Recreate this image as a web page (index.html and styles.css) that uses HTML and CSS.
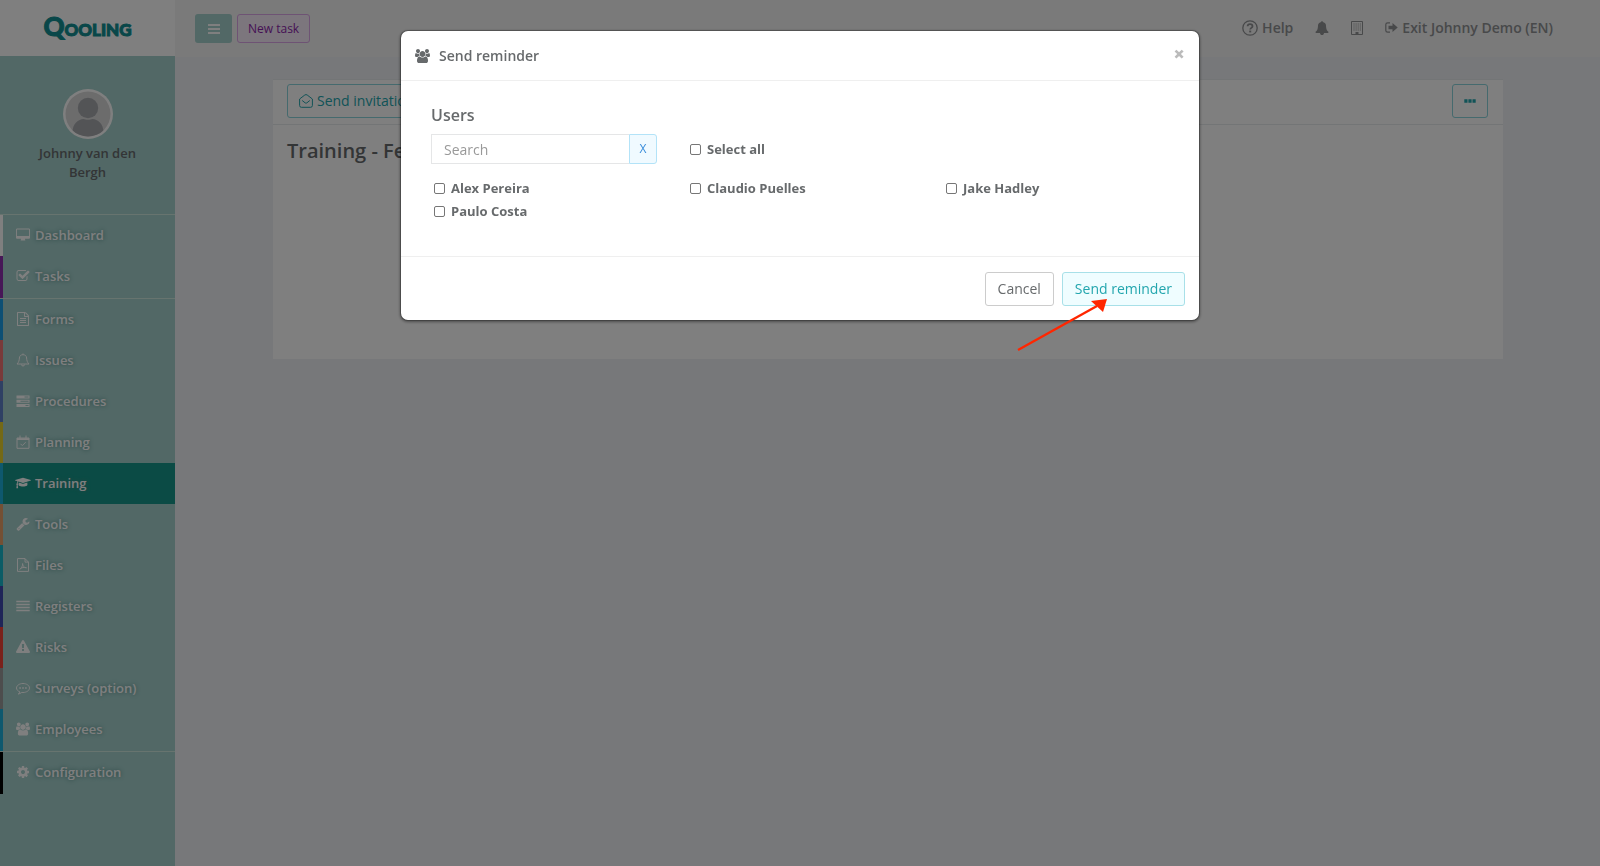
FILE: index.html
```html
<!DOCTYPE html>
<html lang="en">
<head>
<meta charset="utf-8">
<title>Qooling - Training</title>
<link rel="stylesheet" href="styles.css">
</head>
<body>
<div class="app">
  <aside class="sidebar">
    <a class="logo" href="#"><span class="logo-q">Q</span>OOLING</a>
    <div class="profile">
      <svg class="avatar" viewBox="0 0 50 50" aria-hidden="true">
        <defs><clipPath id="face"><circle cx="25" cy="25" r="22.5"/></clipPath></defs>
        <circle cx="25" cy="25" r="25" fill="#fff"/>
        <circle cx="25" cy="25" r="22.5" fill="#d8d8d9"/>
        <g clip-path="url(#face)" fill="#a6a8ad"><circle cx="25" cy="19" r="10.2"/><path d="M9.500 50V43c0-8 6-13 11-13 2 1 7 1 9 0 5 0 11 5 11 13v7z"/></g>
      </svg>
      <div class="profile-name">Johnny van den Bergh</div>
    </div>
    <nav>
      <ul class="menu">
        <li class="c-white"><a href="#"><svg viewBox="0 0 1920 1792"><path d="M1792 992v-832q0-13-9.500-22.500t-22.500-9.500h-1600q-13 0-22.500 9.500t-9.500 22.500v832q0 13 9.500 22.500t22.500 9.500h1600q13 0 22.500-9.500t9.500-22.500zm128-832v1088q0 66-47 113t-113 47h-544q0 37 16 77.500t32 71 16 43.500q0 26-19 45t-45 19h-512q-26 0-45-19t-19-45q0-14 16-44t32-70 16-78h-544q-66 0-113-47t-47-113v-1088q0-66 47-113t113-47h1600q66 0 113 47t47 113z"/></svg>Dashboard</a></li>
        <li class="c-purple"><a href="#"><svg viewBox="0 0 1792 1792"><path d="M1472 930v318q0 119-84.500 203.500t-203.500 84.500h-832q-119 0-203.500-84.500t-84.500-203.500v-832q0-119 84.500-203.500t203.500-84.500h832q63 0 117 25 15 7 18 23 3 17-9 29l-49 49q-10 10-23 10-3 0-9-2-23-6-45-6h-832q-66 0-113 47t-47 113v832q0 66 47 113t113 47h832q66 0 113-47t47-113v-254q0-13 9-22l64-64q10-10 23-10 6 0 12 3 20 8 20 29zm231-489l-814 814q-24 24-57 24t-57-24l-430-430q-24-24-24-57t24-57l110-110q24-24 57-24t57 24l263 263 647-647q24-24 57-24t57 24l110 110q24 24 24 57t-24 57z"/></svg>Tasks</a></li>
      </ul>
      <ul class="menu">
        <li class="c-blue"><a href="#"><svg viewBox="0 0 1792 1792"><path d="M1596 380q28 28 48 76t20 88v1152q0 40-28 68t-68 28h-1344q-40 0-68-28t-28-68v-1600q0-40 28-68t68-28h896q40 0 88 20t76 48zm-444-244v376h376q-10-29-22-41l-313-313q-12-12-41-22zm384 1528v-1024h-416q-40 0-68-28t-28-68v-416h-768v1536h1280zM512 768h768v128H512zM512 1024h768v128H512zM512 1280h768v128H512z"/></svg>Forms</a></li>
        <li class="c-salmon"><a href="#"><svg class="line" viewBox="0 0 14 14"><path d="M1 11h12C11.200 9.300 10.800 7.500 10.600 5 10.500 2.800 9 1.700 7 1.700S3.500 2.800 3.400 5C3.200 7.500 2.800 9.300 1 11zM5.500 11.500a1.500 1.500 0 0 0 3 0M7 .5v1"/></svg>Issues</a></li>
        <li class="c-indigo"><a href="#"><svg viewBox="0 0 14 14"><path d="M.5 1.500h13v3H.5zM.5 5.700h13v3H.5zM.5 9.900h13v3H.5z"/><path class="cut" d="M8.500 2.500h4v1h-4zM4.500 6.700h8v1h-8zM9.500 10.900h3v1h-3z"/></svg>Procedures</a></li>
        <li class="c-yellow"><a href="#"><svg class="line" viewBox="0 0 14 14"><path d="M1 3h12v10.300H1zM1 4.500h12M1 3.700h12M4 .5v3M10 .5v3M4.500 8.800l1.800 1.800 3.400-3.400"/></svg>Planning</a></li>
        <li class="c-cyan active"><a href="#"><svg class="wide" viewBox="0 0 2304 1792"><path d="M1774 836l18 316q4 69-82 128t-235 93.500-323 34.500-323-34.500-235-93.500-82-128l18-316 574 181q22 7 48 7t48-7zm530-324q0 23-22 31l-1120 352q-4 1-10 1t-10-1l-652-206q-43 34-71 111.500t-34 178.500q63 36 63 109 0 69-58 107l58 433q2 14-8 25-9 11-24 11h-192q-15 0-24-11-10-11-8-25l58-433q-58-38-58-107 0-73 65-111 11-207 98-330l-333-104q-22-8-22-31t22-31l1120-352q4-1 10-1t10 1l1120 352q22 8 22 31z"/></svg>Training</a></li>
        <li class="c-orange"><a href="#"><svg viewBox="0 0 1792 1792"><path d="M448 1472q0-26-19-45t-45-19-45 19-19 45 19 45 45 19 45-19 19-45zm644-420l-682 682q-37 37-90 37-52 0-91-37l-106-108q-38-36-38-90 0-53 38-91l681-681q39 98 114.500 173.500t173.500 114.500zm634-435q0 39-23 106-47 134-164.500 217.500t-258.500 83.500q-185 0-316.500-131.500t-131.500-316.500 131.500-316.500 316.500-131.500q58 0 121.500 16.500t107.500 46.500q16 11 16 28t-16 28l-293 169v224l193 107q5-3 79-48.500t135.500-81 70.500-35.500q15 0 23.500 10t8.500 25z"/></svg>Tools</a></li>
        <li class="c-teal"><a href="#"><svg class="line" viewBox="0 0 14 14"><path d="M1.500.6h7.500l3.500 3.500v9.300h-11zM9 .6v3.500h3.500M3.500 11.600c1.800-.8 3.200-3.600 3.200-6M6.500 5.500c.1 2.200 1.500 4.200 4 4.500M4.200 10.600c1.600-1 3.800-1.400 6.300-1"/></svg>Files</a></li>
        <li class="c-navy"><a href="#"><svg viewBox="0 0 14 14"><path d="M.3 1.700h13.400v1.600H.3zM.3 4.700h13.400v1.600H.3zM.3 7.700h13.400v1.600H.3zM.3 10.700h13.400v1.600H.3z"/></svg>Registers</a></li>
        <li class="c-red"><a href="#"><svg viewBox="0 0 1792 1792"><path d="M1024 1375v-190q0-14-9.500-23.500t-22.500-9.500h-192q-13 0-22.500 9.500t-9.500 23.500v190q0 14 9.500 23.500t22.500 9.500h192q13 0 22.500-9.500t9.500-23.500zm-2-374l18-459q0-12-10-19-13-11-24-11h-220q-11 0-24 11-10 7-10 21l17 457q0 10 10 16.500t24 6.500h185q14 0 23.500-6.500t10.500-16.500zm-14-934l768 1408q35 63-2 126-17 29-46.500 46t-63.500 17h-1536q-34 0-63.500-17t-46.500-46q-37-63-2-126l768-1408q17-31 47-49t65-18 65 18 47 49z"/></svg>Risks</a></li>
        <li class="c-grey"><a href="#"><svg class="line" viewBox="0 0 14 14"><path d="M4 11c-2-.8-3.500-2.300-3.500-4 0-2.500 3-4.500 6.500-4.500s6.500 2 6.500 4.500-3 4.500-6.500 4.500L5.800 11.400C4.800 12.300 3.500 12.900 2.200 13c1-.6 1.600-1.200 1.800-2z"/><path class="dots" d="M3.300 6.200h1.600v1.600H3.300zM6.200 6.200h1.600v1.600H6.200zM9.100 6.200h1.600v1.600H9.100z"/></svg>Surveys (option)</a></li>
        <li class="c-cyan"><a href="#"><svg viewBox="0 0 1920 1792"><path d="M593 896q-162 5-265 128h-134q-82 0-138-40.500t-56-118.500q0-353 124-353 6 0 43.500 21t97.500 42.500 119 21.500q67 0 133-23-5 37-5 66 0 159 81 256zm1071 637q0 120-73 189.500t-194 69.500h-874q-121 0-194-69.500t-73-189.500q0-53 3.500-103.500t14-109 26.500-108.500 43-97.500 62-81 85.500-53.500 111.500-20q10 0 43 21.500t73 48 107 48 135 21.500 135-21.500 107-48 73-48 43-21.500q61 0 111.500 20t85.500 53.500 62 81 43 97.500 26.500 108.500 14 109 3.500 103.500zm-1024-1277q0 106-75 181t-181 75-181-75-75-181 75-181 181-75 181 75 75 181zm704 384q0 159-112.500 271.500t-271.500 112.500-271.500-112.500-112.500-271.500 112.500-271.500 271.500-112.500 271.500 112.500 112.500 271.500zm576 225q0 78-56 118.500t-138 40.500h-134q-103-123-265-128 81-97 81-256 0-29-5-66 66 23 133 23 59 0 119-21.500t97.500-42.500 43.500-21q124 0 124 353zm-128-609q0 106-75 181t-181 75-181-75-75-181 75-181 181-75 181 75 75 181z"/></svg>Employees</a></li>
      </ul>
      <ul class="menu">
        <li class="c-black"><a href="#"><svg viewBox="0 0 1792 1792"><path d="M1152 896q0-106-75-181t-181-75-181 75-75 181 75 181 181 75 181-75 75-181zm512-109v222q0 12-8 23t-20 13l-185 28q-19 54-39 91 35 50 107 138 10 12 10 25t-9 23q-27 37-99 108t-94 71q-12 0-26-9l-138-108q-44 23-91 38-16 136-29 186-7 28-36 28h-222q-14 0-24.500-8.500t-11.500-21.500l-28-184q-49-16-90-37l-141 107q-10 9-25 9-14 0-25-11-126-114-165-168-7-10-7-23 0-12 8-23 15-21 51-66.500t54-70.500q-27-50-41-99l-183-27q-13-2-21-12.500t-8-23.500v-222q0-12 8-23t19-13l186-28q14-46 39-92-40-57-107-138-10-12-10-24 0-10 9-23 26-36 98.500-107.500t94.500-71.500q13 0 26 10l138 107q44-23 91-38 16-136 29-186 7-28 36-28h222q14 0 24.500 8.500t11.500 21.500l28 184q49 16 90 37l142-107q9-9 24-9 13 0 25 10 129 119 165 170 7 8 7 22 0 12-8 23-15 21-51 66.500t-54 70.500q26 50 41 98l183 28q13 2 21 12.500t8 23.500z"/></svg>Configuration</a></li>
      </ul>
    </nav>
  </aside>

  <main class="main">
    <header class="topbar">
      <button class="toggle" type="button" aria-label="Toggle menu"><svg viewBox="0 0 12 12"><path d="M0 1h12v2H0zM0 5h12v2H0zM0 9h12v2H0z"/></svg></button>
      <button class="new-task" type="button">New task</button>
      <div class="top-links">
        <a href="#"><svg class="help-icon" viewBox="0 0 16 16"><circle cx="8" cy="8" r="7.200" fill="none" stroke="currentColor" stroke-width="1.300"/><path d="M5.600 6.300C5.700 4.900 6.600 4.200 8 4.200s2.500.8 2.500 2c0 1.600-2.300 1.700-2.300 3.300" fill="none" stroke="currentColor" stroke-width="1.800"/><path d="M7.200 10.600h2v1.800h-2z"/></svg>Help</a>
        <a href="#" aria-label="Notifications"><svg viewBox="0 0 1792 1792"><path d="M1728 1408q0 52-38 90t-90 38h-448q0 106-75 181t-181 75-181-75-75-181h-448q-52 0-90-38t-38-90q50-42 91-88t85-119.500 74.500-158.500 50-206 19.500-260q0-152 117-282.500t307-158.500q-8-19-8-39 0-40 28-68t68-28 68 28 28 68q0 20-8 39 190 28 307 158.500t117 282.500q0 139 19.500 260t50 206 74.500 158.500 85 119.500 91 88z"/></svg></a>
        <a href="#" aria-label="Company"><svg class="building" viewBox="0 0 12 14"><path d="M.5.5h11v13H.5z" fill="none" stroke="currentColor"/><path d="M2.500 3h7.500M2.500 5h7.500M2.500 7h7.500M2.500 9h7.500" fill="none" stroke="currentColor" stroke-dasharray="1 1.100"/><path d="M4.500 11h3v3h-3z"/></svg></a>
        <a href="#"><svg class="exit-icon" viewBox="0 0 13 13"><path d="M5 1.800H2.700Q.8 1.800.8 3.500v6q0 1.700 1.900 1.700H5" fill="none" stroke="currentColor" stroke-width="1.200"/><path d="M3.500 4.800h4V2l5.200 4.500L7.500 11V8.200h-4z"/></svg>Exit Johnny Demo (EN)</a>
      </div>
    </header>
    <section class="card">
      <div class="card-tools">
        <button class="outline" type="button"><svg viewBox="0 0 14 14"><path d="M.6 5v6.500q0 1.800 1.800 1.800h9.200q1.800 0 1.800-1.800V5L8.200 1Q7 .2 5.800 1zM3.200 6.500l3 2.400q.8.500 1.600 0l3-2.400"/></svg>Send invitation</button>
        <button class="outline more" type="button" aria-label="More"><svg class="ellipsis" viewBox="0 0 12 12"><path d="M.3 4.300h3.200v3.400H.3zM4.400 4.300h3.200v3.400H4.400zM8.500 4.300h3.200v3.400H8.500z"/></svg></button>
      </div>
      <h1>Training - Feedback</h1>
    </section>
  </main>
</div>

<div class="backdrop">
  <div class="modal" role="dialog" aria-labelledby="modal-title">
    <div class="modal-header">
      <svg viewBox="0 0 1920 1792"><path d="M593 896q-162 5-265 128h-134q-82 0-138-40.500t-56-118.500q0-353 124-353 6 0 43.500 21t97.500 42.500 119 21.500q67 0 133-23-5 37-5 66 0 159 81 256zm1071 637q0 120-73 189.500t-194 69.500h-874q-121 0-194-69.500t-73-189.500q0-53 3.500-103.500t14-109 26.500-108.500 43-97.500 62-81 85.500-53.500 111.500-20q10 0 43 21.500t73 48 107 48 135 21.500 135-21.500 107-48 73-48 43-21.500q61 0 111.500 20t85.500 53.500 62 81 43 97.500 26.500 108.500 14 109 3.500 103.500zm-1024-1277q0 106-75 181t-181 75-181-75-75-181 75-181 181-75 181 75 75 181zm704 384q0 159-112.500 271.500t-271.500 112.500-271.500-112.500-112.500-271.500 112.500-271.500 271.500-112.500 271.500 112.500 112.500 271.500zm576 225q0 78-56 118.500t-138 40.500h-134q-103-123-265-128 81-97 81-256 0-29-5-66 66 23 133 23 59 0 119-21.500t97.500-42.500 43.500-21q124 0 124 353zm-128-609q0 106-75 181t-181 75-181-75-75-181 75-181 181-75 181 75 75 181z"/></svg>
      <h2 id="modal-title">Send reminder</h2>
      <button class="close" type="button" aria-label="Close">×</button>
    </div>
    <div class="modal-body">
      <h3>Users</h3>
      <div class="search-row">
        <div class="search"><input type="text" placeholder="Search" aria-label="Search users"><button type="button">X</button></div>
        <label class="check"><input type="checkbox">Select all</label>
      </div>
      <div class="users">
        <label class="check"><input type="checkbox">Alex Pereira</label>
        <label class="check"><input type="checkbox">Claudio Puelles</label>
        <label class="check"><input type="checkbox">Jake Hadley</label>
        <label class="check"><input type="checkbox">Paulo Costa</label>
      </div>
    </div>
    <div class="modal-footer">
      <button class="btn" type="button">Cancel</button>
      <button class="btn primary" type="button">Send reminder</button>
    </div>
    <svg class="arrow" viewBox="0 0 90 54" aria-hidden="true"><path d="M1 51L80 7" stroke="#ff2600" stroke-width="2.400"/><path d="M90 0L86 13 74 2z" fill="#ff2600"/></svg>
  </div>
</div>
</body>
</html>
```
FILE: styles.css
```css
* { box-sizing: border-box; }

body {
  margin: 0;
  background: #eff0f4;
  color: #676a6c;
  font: 14px/20px "Open Sans", sans-serif;
}

a { color: inherit; text-decoration: none; }
button, input { font: inherit; color: inherit; }
button { cursor: pointer; }
svg { fill: currentColor; flex: none; }
ul { margin: 0; padding: 0; list-style: none; }
h1, h2, h3 { margin: 0; font-weight: 600; }

.app { display: flex; min-height: 100vh; }

.sidebar { width: 175px; flex: none; background: #a4d0cc; }

.logo {
  display: flex;
  align-items: baseline;
  justify-content: center;
  height: 56px;
  padding-top: 10px;
  background: #fff;
  color: #128f93;
  font: 900 17px/32px Lato, sans-serif;
  -webkit-text-stroke: 1px #128f93;
}
.logo-q { font-size: 26px; }

.profile {
  display: flex;
  flex-direction: column;
  align-items: center;
  height: 158px;
  padding: 33px 32px 0;
  text-align: center;
}
.avatar { width: 50px; height: 50px; }
.profile-name { margin-top: 5px; line-height: 19px; font-weight: 600; font-size: 13px; }

.menu { border-top: 1px solid #cfe8df; }
.menu li { height: 41px; border-left-width: 3px; border-left-style: solid; }
.menu li:last-child { height: 42px; }
.menu a {
  display: flex;
  align-items: center;
  gap: 5px;
  height: 41px;
  padding: 0 0 2px 13px;
  color: #fff;
  font-size: 13px;
  font-weight: 600;
  text-shadow: 0 0 4px #4f8984;
}
.menu svg { width: 14px; height: 14px; }
.menu .wide { width: 16px; margin: 0 -1px; }
.menu .line { fill: none; stroke: currentColor; stroke-width: 1; }
.menu .dots { fill: currentColor; stroke: none; }
.menu .cut { fill: #a4d0cc; }
.menu .active a { background: #16978a; }

.c-white { border-color: #fff; }
.c-purple { border-color: #8e2fae; }
.c-blue { border-color: #1a9fe8; }
.c-salmon { border-color: #f27474; }
.c-indigo { border-color: #5f80c8; }
.c-yellow { border-color: #e8d22c; }
.c-cyan { border-color: #1cb0dc; }
.c-orange { border-color: #e8a068; }
.c-teal { border-color: #16b8cc; }
.c-navy { border-color: #3f4bb0; }
.c-red { border-color: #f44336; }
.c-grey { border-color: #9a9a9a; }
.c-black { border-color: #000; }

.main { flex: 1; min-width: 0; }

.topbar {
  display: flex;
  align-items: center;
  gap: 5px;
  height: 57px;
  padding: 0 47px 0 20px;
  background: #f4f4f4;
}
.toggle {
  display: flex;
  align-items: center;
  justify-content: center;
  width: 37px;
  height: 29px;
  border: 0;
  border-radius: 3px;
  background: #a4d0cc;
  color: #fff;
}
.toggle svg { width: 12px; height: 12px; }
.new-task {
  height: 29px;
  padding: 0 10px;
  border: 1px solid #dda6e8;
  border-radius: 3px;
  background: #f8ecfa;
  color: #8c1faa;
  font-size: 12px;
  line-height: 18px;
}
.top-links { display: flex; gap: 22px; margin-left: auto; padding-bottom: 2px; font-weight: 600; color: #909294; }
.top-links a { display: flex; align-items: center; gap: 4px; }
.top-links svg { width: 14px; height: 14px; }
.top-links .help-icon { width: 16px; height: 16px; }
.top-links .building { width: 12px; }
.top-links .exit-icon { width: 13px; height: 13px; }

.card { margin: 23px 97px 0 98px; height: 279px; background: #fff; box-shadow: 0 -1px 0 #e7eaec; }
.card-tools {
  display: flex;
  justify-content: space-between;
  height: 45px;
  padding: 4px 15px 0 14px;
  border-bottom: 1px solid #e7eaec;
}
.outline {
  display: flex;
  align-items: center;
  gap: 4px;
  height: 34px;
  padding: 0 11px;
  border: 1px solid #8ad4dc;
  border-radius: 3px;
  background: none;
  color: #23a6ae;
}
.outline svg { width: 14px; height: 14px; fill: none; stroke: currentColor; }
.outline .ellipsis { width: 12px; height: 12px; fill: currentColor; stroke: none; }
.card h1 { padding: 13px 14px; font-size: 20px; line-height: 26px; }

.backdrop { position: fixed; inset: 0; background: rgba(0, 0, 0, .5); }

.modal {
  position: relative;
  max-width: 800px;
  margin: 30px auto;
  border: 1px solid rgba(0, 0, 0, .2);
  border-radius: 8px;
  background: #fff;
  background-clip: padding-box;
  box-shadow: 0 1px 3px rgba(0, 0, 0, .4);
}
.modal-header {
  display: flex;
  align-items: center;
  height: 50px;
  padding: 0 14px;
  border-bottom: 1px solid #efefef;
}
.modal-header svg { width: 15px; height: 14px; margin-right: 9px; }
.modal-header h2 { font-size: 14px; }
.close {
  margin-left: auto;
  padding: 0 0 3px;
  border: 0;
  background: none;
  color: #bbb;
  font-size: 20px;
  font-weight: 800;
}
.modal-body { padding: 24px 0 33px 30px; }
.modal-body h3 { margin-bottom: 9px; font-size: 16px; line-height: 20px; }
.search-row, .users { display: grid; grid-template-columns: repeat(3, minmax(0, 1fr)); }
.search-row { align-items: center; margin-bottom: 13px; }
.search { display: flex; margin-right: 30px; }
.search input {
  flex: 1;
  min-width: 0;
  height: 30px;
  padding: 0 12px;
  border: 1px solid #e5e6e7;
  border-right: 0;
  background: #fff;
}
.search input::placeholder { color: #999; }
.search button {
  width: 28px;
  height: 30px;
  padding: 0;
  border: 1px solid #b3e3f8;
  border-radius: 0 3px 3px 0;
  background: #f0faff;
  color: #3a8ddb;
  font-size: 12px;
}
.check { display: flex; align-items: center; gap: 6px; font-size: 13px; line-height: 23px; font-weight: 700; }
.check input {
  appearance: none;
  width: 11px;
  height: 11px;
  margin: 0 0 0 3px;
  border: 1px solid #767676;
  border-radius: 2px;
  background: #fff;
}
.modal-footer {
  display: flex;
  justify-content: flex-end;
  gap: 8px;
  padding: 15px 14px 14px;
  border-top: 1px solid #efefef;
}
.btn {
  height: 34px;
  padding: 0 12px;
  border: 1px solid #ccc;
  border-radius: 3px;
  background: #fff;
}
.btn.primary { border-color: #a8e0e8; background: #effdff; color: #23a6ae; }

.arrow { position: absolute; right: 92px; bottom: -33px; width: 90px; height: 54px; }
```
